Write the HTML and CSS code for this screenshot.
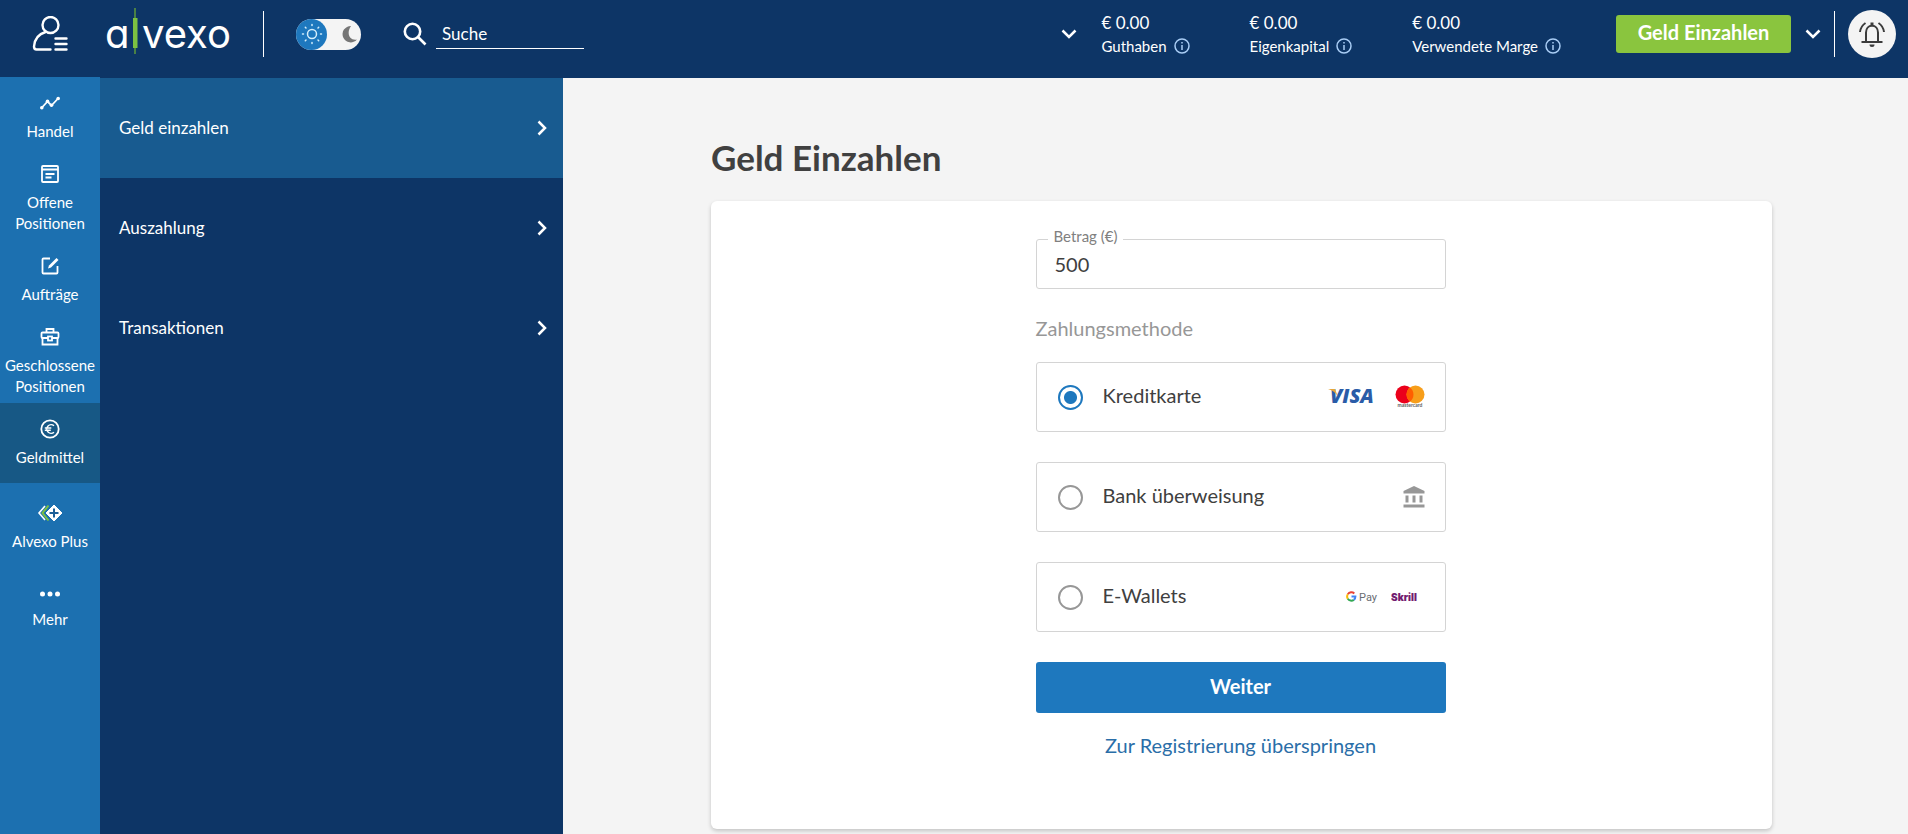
FILE: index.html
```html
<!DOCTYPE html>
<html lang="de">
<head>
<meta charset="utf-8">
<meta name="viewport" content="width=device-width, initial-scale=1">
<title>Geld Einzahlen</title>
<link rel="stylesheet" href="styles.css">
</head>
<body>
<header class="topbar">
  <button class="icon-button profile" type="button" aria-label="Profil">
    <svg width="36" height="36" viewBox="0 0 36 36" fill="none" stroke="#fff" stroke-width="2.4" stroke-linecap="round" stroke-linejoin="round">
      <circle cx="18.500" cy="9" r="8"/>
      <path d="M13.500 16C7 18 2.500 23 2 30.500c0 2 .8 3 2.500 3h14"/>
      <path d="M23.500 22.500h11M23.500 28h11M23.500 33.500h11"/>
    </svg>
  </button>
  <a class="logo" href="#" aria-label="alvexo">
    <svg width="128" height="52" viewBox="0 0 128 52">
      <text class="logo-text" x="0" y="42">a</text>
      <path d="M30 2v46" stroke="#5e9a3c" stroke-width="1.500"/>
      <path d="M28 12h4.500v30H28z" fill="#7cc142"/>
      <text class="logo-text" x="37" y="42">vexo</text>
    </svg>
  </a>
  <span class="divider"></span>
  <button class="theme-toggle" type="button" aria-label="Farbschema">
    <span class="theme-knob">
      <svg width="22" height="22" viewBox="0 0 22 22" fill="none" stroke="#d5eefb" stroke-width="1.500" stroke-linecap="round">
        <circle cx="11" cy="11" r="4.500"/>
        <path d="M11 1.500v1M11 19.500v1M1.500 11h1M19.500 11h1M4.300 4.300l.7.7M17 17l.7.7M4.300 17.700l.7-.7M17 5l.7-.7"/>
      </svg>
    </span>
    <svg width="20" height="18" viewBox="0 0 20 18"><path d="M12 1A8.200 8.200 0 1 0 18 14.500C10.500 16 7 8 12 1z" fill="#767676"/></svg>
  </button>
  <form class="search" role="search">
    <svg width="24" height="24" viewBox="0 0 24 24" fill="none" stroke="#fff" stroke-width="2.600"><circle cx="9.500" cy="9.500" r="7.700"/><path d="M15 15l7.500 7.500"/></svg>
    <input class="search-input" type="search" placeholder="Suche" aria-label="Suche">
  </form>
  <div class="account">
    <button class="icon-button" type="button" aria-label="Konto wechseln">
      <svg width="16" height="10" viewBox="0 0 16 10" fill="none" stroke="#fff" stroke-width="2.500"><path d="M1.500 1.500L8 8l6.500-6.500"/></svg>
    </button>
    <dl class="stats">
      <div class="stat"><dd>€ 0.00</dd><dt>Guthaben <svg class="info" viewBox="0 0 16 16"><circle cx="8" cy="8" r="7"/><path d="M8 7v5M8 4v1.600"/></svg></dt></div>
      <div class="stat"><dd>€ 0.00</dd><dt>Eigenkapital <svg class="info" viewBox="0 0 16 16"><circle cx="8" cy="8" r="7"/><path d="M8 7v5M8 4v1.600"/></svg></dt></div>
      <div class="stat"><dd>€ 0.00</dd><dt>Verwendete Marge <svg class="info" viewBox="0 0 16 16"><circle cx="8" cy="8" r="7"/><path d="M8 7v5M8 4v1.600"/></svg></dt></div>
    </dl>
    <button class="deposit" type="button">Geld Einzahlen</button>
    <button class="icon-button more" type="button" aria-label="Weitere Aktionen">
      <svg width="16" height="10" viewBox="0 0 16 10" fill="none" stroke="#fff" stroke-width="2.500"><path d="M1.500 1.500L8 8l6.500-6.500"/></svg>
    </button>
    <span class="divider"></span>
    <button class="bell" type="button" aria-label="Benachrichtigungen">
      <svg width="28" height="28" viewBox="0 0 28 28" fill="none" stroke="#3c3c3c" stroke-width="2">
        <path d="M8 22V12.500c0-4 2.500-6.700 6-6.700s6 2.700 6 6.700V22"/>
        <path d="M3.500 22h21"/><path d="M14 2.500V6" stroke-width="3"/>
        <path d="M11.500 24.500h5a2.500 2.500 0 0 1-5 0z" fill="#3c3c3c" stroke="none"/>
        <path d="M7.500 3C4.500 5 2.500 8 2 12M20.500 3c3 2 5 5 5.500 9"/>
      </svg>
    </button>
  </div>
</header>

<div class="layout">
  <nav class="rail" aria-label="Hauptmenü">
    <a class="rail-item" href="#">
      <svg class="rail-icon" viewBox="0 0 20 20"><path d="M1.500 15l6-6.500 4 4L18.500 5" fill="none" stroke="#fff" stroke-width="1.800"/><g fill="#fff"><circle cx="1.800" cy="14.700" r="1.800"/><circle cx="7.500" cy="8.300" r="1.800"/><circle cx="11.500" cy="12.300" r="1.800"/><circle cx="18.200" cy="5.500" r="1.800"/></g></svg>
      <span>Handel</span>
    </a>
    <a class="rail-item" href="#">
      <svg class="rail-icon line" viewBox="0 0 20 20"><rect x="2" y="2" width="16" height="16" rx="1"/><path d="M2 5.500h16M5.500 10h9M5.500 13.500h6"/></svg>
      <span>Offene Positionen</span>
    </a>
    <a class="rail-item" href="#">
      <svg class="rail-icon line" viewBox="0 0 20 20"><path d="M10 2.500H3.500a1 1 0 0 0-1 1v13a1 1 0 0 0 1 1h13a1 1 0 0 0 1-1V10"/><path d="M8 12.500l1-3L16.500 2l2 2-7.500 7.500z" fill="#fff" stroke="none"/></svg>
      <span>Aufträge</span>
    </a>
    <a class="rail-item" href="#">
      <svg class="rail-icon line" viewBox="0 0 20 20"><rect x="1.500" y="5.500" width="17" height="5.500" rx="1"/><path d="M2.500 11v6.500h15V11M6.500 5.500V2h7v3.500"/><rect x="8" y="9.500" width="4" height="4" fill="#1c70b0"/></svg>
      <span>Geschlossene Positionen</span>
    </a>
    <a class="rail-item rail-item-active" href="#" aria-current="page">
      <svg class="rail-icon line" viewBox="0 0 20 20"><circle cx="10" cy="10" r="8.700"/><path d="M14 6.800a4.300 4.300 0 1 0 0 6.400M4.800 9h6.500M4.800 11.200h6" stroke-width="1.400"/></svg>
      <span>Geldmittel</span>
    </a>
    <a class="rail-item rail-item-tall" href="#">
      <svg class="rail-icon wide" viewBox="0 0 26 20"><path d="M8 3L2 10l6 7" fill="none" stroke="#fff" stroke-width="1.600"/><path d="M11.500 2.500L5.500 10l6 7.500" fill="none" stroke="#7cc142" stroke-width="2"/><path d="M17 2l8 8-8 8-8-8z" fill="#fff" stroke="#fff" stroke-width="1" stroke-linejoin="round"/><path d="M17 5.500v9M12.500 10h9" stroke="#1c5f98" stroke-width="2"/></svg>
      <span>Alvexo Plus</span>
    </a>
    <a class="rail-item rail-item-more" href="#">
      <svg class="rail-icon" viewBox="0 0 20 20" fill="#fff"><circle cx="2.500" cy="10" r="2.500"/><circle cx="10" cy="10" r="2.500"/><circle cx="17.500" cy="10" r="2.500"/></svg>
      <span>Mehr</span>
    </a>
  </nav>

  <nav class="submenu" aria-label="Geldmittel">
    <a class="submenu-item submenu-item-active" href="#" aria-current="page">Geld einzahlen <svg class="arrow" viewBox="0 0 10 16"><path d="M1.500 1.500L8 8l-6.500 6.500"/></svg></a>
    <a class="submenu-item" href="#">Auszahlung <svg class="arrow" viewBox="0 0 10 16"><path d="M1.500 1.500L8 8l-6.500 6.500"/></svg></a>
    <a class="submenu-item" href="#">Transaktionen <svg class="arrow" viewBox="0 0 10 16"><path d="M1.500 1.500L8 8l-6.500 6.500"/></svg></a>
  </nav>

  <main class="content">
    <h1 class="title">Geld Einzahlen</h1>
    <section class="card">
      <form class="form">
        <div class="amount">
          <label class="amount-label" for="amount">Betrag (€)</label>
          <input class="amount-input" id="amount" type="text" inputmode="decimal" value="500">
        </div>
        <fieldset class="methods">
          <legend class="methods-title">Zahlungsmethode</legend>
          <label class="method">
            <input class="radio" type="radio" name="method" checked>
            <span class="method-name">Kreditkarte</span>
            <svg width="56" height="36" viewBox="0 0 56 36"><text class="visa" x="4" y="24">VISA</text><path d="M2 10h7l3 8C10 14 7 11.500 2 10z" fill="#e6a63c"/></svg>
            <svg class="mastercard" width="30" height="24" viewBox="0 0 30 24"><circle cx="9.500" cy="9.500" r="9" fill="#eb001b"/><circle cx="20.500" cy="9.500" r="9" fill="#f79e1b"/><path d="M15 2.400a9 9 0 0 1 0 14.200 9 9 0 0 1 0-14.200z" fill="#ff5f00"/><text class="mastercard-text" x="15" y="22">mastercard</text></svg>
          </label>
          <label class="method">
            <input class="radio" type="radio" name="method">
            <span class="method-name">Bank überweisung</span>
            <svg width="22" height="22" viewBox="0 0 22 22" fill="#979797"><path d="M11 0l10.500 5v2.500H.5V5zM2.500 9.500h3v7h-3zM9.500 9.500h3v7h-3zM16.500 9.500h3v7h-3zM.5 18.500h21v3H.5z"/></svg>
          </label>
          <label class="method">
            <input class="radio" type="radio" name="method">
            <span class="method-name">E-Wallets</span>
            <svg width="33" height="16" viewBox="0 0 33 16" fill="none" stroke-width="2">
              <path d="M8.300 4.500A4.300 4.300 0 0 0 1.800 5.200" stroke="#ea4335"/><path d="M1.800 5.200a4.300 4.300 0 0 0 0 4.500" stroke="#fbbc04"/><path d="M1.800 9.700a4.300 4.300 0 0 0 6 1.200" stroke="#34a853"/><path d="M7.800 10.900A4.300 4.300 0 0 0 9.400 7.500H5.500" stroke="#4285f4"/>
              <text class="gpay" x="13" y="12">Pay</text>
            </svg>
            <svg class="skrill" width="28" height="16" viewBox="0 0 28 16"><text class="skrill-text" x="0" y="12">Skrill</text></svg>
          </label>
        </fieldset>
        <button class="submit" type="submit">Weiter</button>
        <a class="skip" href="#">Zur Registrierung überspringen</a>
      </form>
    </section>
  </main>
</div>
</body>
</html>
```
FILE: styles.css
```css
* {
  box-sizing: border-box;
}

body {
  margin: 0;
  min-height: 100vh;
  display: flex;
  flex-direction: column;
  background: #f4f4f4;
  color: #404040;
  font-family: Lato, "Open Sans", sans-serif;
  font-size: 17px;
  line-height: 24px;
}

button,
input {
  font: inherit;
}

button {
  border: 0;
  padding: 0;
  cursor: pointer;
}

a {
  color: inherit;
  text-decoration: none;
}

svg {
  flex: none;
}

/* Top bar */

.topbar {
  display: flex;
  align-items: center;
  height: 77px;
  padding: 0 12px 9px 32px;
  background: #0d3566;
  color: #fff;
}

.icon-button {
  display: flex;
  background: none;
}

.logo {
  display: flex;
  margin: 0 30px 4px 37px;
}

.logo-text {
  fill: #fff;
  font-family: Inter, Lato, sans-serif;
  font-size: 40px;
  font-weight: 400;
  font-feature-settings: "cv11";
}

.divider {
  width: 1px;
  height: 46px;
  background: #fff;
}

.theme-toggle {
  display: flex;
  align-items: center;
  justify-content: space-between;
  width: 65px;
  height: 31px;
  margin-left: 32px;
  padding-right: 2px;
  border-radius: 16px;
  background: #f4f4f4;
}

.theme-knob {
  display: flex;
  align-items: center;
  justify-content: center;
  width: 31px;
  height: 31px;
  border-radius: 50%;
  background: #1e78be;
}

.search {
  display: flex;
  align-items: center;
  gap: 9px;
  margin-left: 42px;
}

.search-input {
  width: 148px;
  height: 30px;
  padding: 0 6px;
  border: 0;
  border-bottom: 1px solid #fff;
  background: none;
  color: #fff;
}

.search-input::placeholder {
  color: #fff;
  opacity: 1;
}

.account {
  display: flex;
  align-items: center;
  margin-left: auto;
}

.stats {
  display: flex;
  gap: 60px;
  margin: 0 55px 0 24px;
  padding-top: 2px;
}

.stat dd {
  margin: 0;
  line-height: 22px;
}

.stat dt {
  display: flex;
  align-items: center;
  gap: 7px;
  font-size: 15px;
  white-space: nowrap;
}

.info {
  width: 16px;
  height: 16px;
  fill: none;
  stroke: #a9cdf5;
  stroke-width: 1.5;
}

.deposit {
  width: 175px;
  height: 38px;
  padding-bottom: 4px;
  border-radius: 3px;
  background: #8ac53e;
  color: #fff;
  font-size: 20px;
  font-weight: 700;
}

.more {
  margin: 0 13px 0 14px;
}

.bell {
  display: flex;
  align-items: center;
  justify-content: center;
  width: 48px;
  height: 48px;
  margin-left: 13px;
  border-radius: 50%;
  background: #f4f4f4;
}

/* Page columns */

.layout {
  display: flex;
  flex: 1;
}

.rail {
  width: 100px;
  background: #1c70b0;
  color: #fff;
  font-size: 15px;
  line-height: 21px;
  text-align: center;
}

.rail-item {
  display: flex;
  flex-direction: column;
  align-items: center;
  gap: 8px;
  padding: 16px 4px 6px;
}

.rail-item-active {
  padding-bottom: 15px;
  background: #175885;
}

.rail-item-tall {
  padding: 20px 4px 12px;
}

.rail-item-more {
  gap: 5px;
  padding-top: 20px;
}

.rail-icon {
  width: 20px;
  height: 20px;
}

.wide {
  width: 26px;
}

.line {
  fill: none;
  stroke: #fff;
  stroke-width: 1.8;
}

.submenu {
  width: 463px;
  border-top: 1px solid #0d3566;
  background: #0d3566;
  color: #fff;
}

.submenu-item {
  display: flex;
  align-items: center;
  justify-content: space-between;
  height: 100px;
  padding: 0 16px 0 19px;
}

.submenu-item-active {
  background: #185b90;
}

.arrow {
  width: 10px;
  height: 16px;
  fill: none;
  stroke: #fff;
  stroke-width: 2.5;
}

.content {
  flex: 1;
  padding: 59px 136px 5px 148px;
  border-top: 1px solid #0d3566;
}

.title {
  margin: 0 0 24px;
  font-size: 35px;
  line-height: 40px;
  font-weight: 700;
}

/* Deposit form */

.card {
  padding: 38px 26px 71px 24px;
  border-radius: 6px;
  background: #fff;
  box-shadow: 0 2px 4px rgba(0, 0, 0, 0.2);
}

.form {
  display: flex;
  flex-direction: column;
  max-width: 410px;
  margin: 0 auto;
}

.amount {
  position: relative;
}

.amount-label {
  position: absolute;
  top: -13px;
  left: 12px;
  padding: 0 6px;
  background: #fff;
  color: #808080;
  font-size: 15px;
  line-height: 20px;
}

.amount-input {
  width: 100%;
  height: 50px;
  padding: 0 18px;
  border: 1px solid #d4d4d4;
  border-radius: 3px;
  background: #fff;
  color: #404040;
  font-size: 20px;
}

.methods {
  display: flex;
  flex-direction: column;
  gap: 30px;
  min-width: 0;
  margin: 27px 0 30px;
  padding: 0;
  border: 0;
}

.methods-title {
  margin-bottom: 22px;
  padding: 0;
  color: #979797;
  font-size: 20px;
}

.method {
  display: flex;
  align-items: center;
  height: 70px;
  padding: 0 20px 0 21px;
  border: 1px solid #d4d4d4;
  border-radius: 3px;
  font-size: 20px;
}

.radio {
  appearance: none;
  width: 25px;
  height: 25px;
  margin: 0 20px 0 0;
  border: 2px solid #979797;
  border-radius: 50%;
}

.radio:checked {
  border-color: #1e78be;
  background: radial-gradient(circle, #1e78be 6px, #fff 7px);
}

.method-name {
  margin-right: auto;
  padding-bottom: 4px;
}

.visa {
  fill: #2a5ca8;
  font-family: "Open Sans", sans-serif;
  font-size: 20px;
  font-style: italic;
  font-weight: 800;
}

.mastercard {
  margin-left: 13px;
}

.mastercard-text {
  fill: #606060;
  font-size: 5px;
  font-weight: 700;
  text-anchor: middle;
}

.gpay {
  fill: #6a6e73;
  stroke: none;
  font-family: Roboto, sans-serif;
  font-size: 11px;
}

.skrill {
  margin: 0 6px 0 12px;
}

.skrill-text {
  fill: #721c70;
  font-family: Inter, sans-serif;
  font-size: 10px;
  font-weight: 900;
}

.submit {
  height: 51px;
  padding-bottom: 4px;
  border-radius: 3px;
  background: #1e78be;
  color: #fff;
  font-size: 20px;
  font-weight: 700;
}

.skip {
  margin: 20px auto 1px;
  color: #2a6ea8;
  font-size: 20px;
}
```
